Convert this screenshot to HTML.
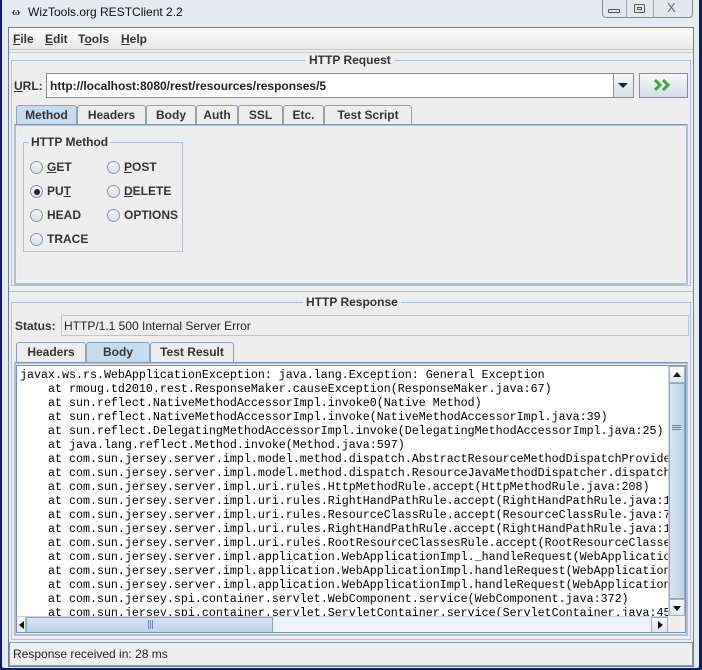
<!DOCTYPE html>
<html><head><meta charset="utf-8"><style>
*{box-sizing:border-box;margin:0;padding:0}
body{width:702px;height:670px;overflow:hidden;background:#0c1a78;font-family:"Liberation Sans",sans-serif;position:relative}
.a{position:absolute}
.frame{left:2px;top:0;width:697px;height:668px;background:#e6ebf3;border-radius:0 0 2px 2px}
.win{left:8px;top:27px;width:686px;height:640px;background:#eeeeee;border:1px solid #6f7f92}
.b{font-weight:bold;font-size:12px;color:#333}
.t{font-size:12px;color:#111}
.u{text-decoration:underline}
.tb{position:absolute;top:0;height:20px;border:1px solid #8ea1b8;border-bottom:none;background:#eeeeee;font-weight:bold;font-size:12px;color:#333;text-align:center;line-height:18px;border-radius:3px 3px 0 0}
.tb.sel{background:#c7dbef}
.rad{position:absolute;width:13px;height:13px;border-radius:50%;border:1px solid #8a96a4;background:linear-gradient(#f4f6f9,#d7dee8)}
.rl{position:absolute;font-weight:bold;font-size:12px;color:#333}
pre{font-family:"Liberation Mono",monospace;font-size:11.67px;line-height:14px;color:#000}
</style></head><body>
<div class="a frame"></div>
<div class="a" style="left:12px;top:6px;font-size:11px;font-weight:bold;color:#333;font-family:'Liberation Serif',serif">ω</div>
<div class="a" style="left:28px;top:5px;font-size:12px;color:#111">WizTools.org RESTClient 2.2</div>
<div class="a" style="left:602px;top:0;width:91px;height:18px;border:1px solid #7d8799;border-top:none;border-radius:0 0 4px 4px;background:#e3e8ef"></div>
<div class="a" style="left:626px;top:0;width:1px;height:18px;background:#9aa3b2"></div>
<div class="a" style="left:653px;top:0;width:1px;height:18px;background:#9aa3b2"></div>
<div class="a" style="left:608px;top:9px;width:12px;height:4px;border:1px solid #555;border-radius:1px"></div>
<div class="a" style="left:634px;top:4px;width:11px;height:9px;border:1px solid #555;border-radius:1px"></div>
<div class="a" style="left:637px;top:7px;width:5px;height:3px;border:1px solid #555"></div>
<div class="a" style="left:667px;top:0px;font-size:13px;color:#666">X</div>

<div class="a win"></div>
<div class="a" style="left:9px;top:28px;width:684px;height:22px;background:linear-gradient(#fbfbfb,#e9e9e9);border-bottom:1px solid #c9c9c9"></div>
<div class="a b" style="left:13px;top:32px"><span class="u">F</span>ile</div>
<div class="a b" style="left:45px;top:32px"><span class="u">E</span>dit</div>
<div class="a b" style="left:78px;top:32px">T<span class="u">o</span>ols</div>
<div class="a b" style="left:121px;top:32px"><span class="u">H</span>elp</div>
<div class="a" style="left:9px;top:52px;width:684px;height:1px;background:#ccc"></div>
<div class="a" style="left:11px;top:60px;width:680px;height:226px;border:1px solid #a9c1da"></div>
<div class="a b" style="left:306px;top:53px;background:#eee;padding:0 3px">HTTP Request</div>
<div class="a b" style="left:14px;top:79px"><span class="u">U</span>RL:</div>
<div class="a" style="left:46px;top:73px;width:588px;height:25px;border:1px solid #7d8ea2;background:#fff"></div>
<div class="a t" style="left:50px;top:79px;font-weight:bold;color:#222">http://localhost:8080/rest/resources/responses/5</div>
<div class="a" style="left:613px;top:74px;width:20px;height:23px;border-left:1px solid #7d8ea2;background:linear-gradient(#f5f7fa,#d6dee8)"></div>
<div class="a" style="left:618px;top:83px;width:0;height:0;border-left:5px solid transparent;border-right:5px solid transparent;border-top:5px solid #222"></div>
<div class="a" style="left:639px;top:73px;width:49px;height:25px;border:1px solid #7d8ea2;background:linear-gradient(#f8fafc,#d3dce8)"></div>
<svg class="a" style="left:654px;top:78px" width="18" height="14" viewBox="0 0 18 14"><path d="M1 2l5 5-5 5M9 2l5 5-5 5" fill="none" stroke="#3aa82a" stroke-width="3"/></svg>
<div style="position:absolute;left:16px;top:105px">
<div class="tb sel" style="left:0;width:61px">Method</div>
<div class="tb" style="left:61px;width:69px">Headers</div>
<div class="tb" style="left:130px;width:50px">Body</div>
<div class="tb" style="left:180px;width:42px">Auth</div>
<div class="tb" style="left:222px;width:45px">SSL</div>
<div class="tb" style="left:267px;width:41px">Etc.</div>
<div class="tb" style="left:308px;width:88px">Test Script</div>
</div>
<div class="a" style="left:14px;top:124px;width:674px;height:161px;border:2px solid #a9c1da;box-shadow:inset 0 0 0 1px #eef2f7"></div>
<div class="a" style="left:15px;top:124px;width:672px;height:1px;background:#7d96b4"></div>
<div class="a" style="left:23px;top:142px;width:160px;height:110px;border:1px solid #a9c1da"></div>
<div class="a b" style="left:29px;top:135px;background:#eee;padding:0 2px">HTTP Method</div>
<div class="rad" style="left:30px;top:161px"></div><div class="rl" style="left:47px;top:160px"><span class="u">G</span>ET</div>
<div class="rad" style="left:107px;top:161px"></div><div class="rl" style="left:124px;top:160px"><span class="u">P</span>OST</div>
<div class="rad" style="left:30px;top:185px"></div><div class="a" style="left:34px;top:189px;width:6px;height:6px;border-radius:50%;background:#222"></div><div class="rl" style="left:47px;top:184px">PU<span class="u">T</span></div>
<div class="rad" style="left:107px;top:185px"></div><div class="rl" style="left:124px;top:184px"><span class="u">D</span>ELETE</div>
<div class="rad" style="left:30px;top:209px"></div><div class="rl" style="left:47px;top:208px">HEAD</div>
<div class="rad" style="left:107px;top:209px"></div><div class="rl" style="left:124px;top:208px">OPTIONS</div>
<div class="rad" style="left:30px;top:233px"></div><div class="rl" style="left:47px;top:232px">TRACE</div>
<div class="a" style="left:9px;top:291px;width:684px;height:1px;background:#bbb"></div>
<div class="a" style="left:11px;top:302px;width:680px;height:338px;border:1px solid #a9c1da"></div>
<div class="a b" style="left:303px;top:295px;background:#eee;padding:0 3px">HTTP Response</div>
<div class="a b" style="left:15px;top:319px">Status:</div>
<div class="a" style="left:61px;top:315px;width:628px;height:21px;border:1px solid #b7c6d6"></div>
<div class="a t" style="left:64px;top:319px;color:#222">HTTP/1.1 500 Internal Server Error</div>
<div style="position:absolute;left:16px;top:342px">
<div class="tb" style="left:0;width:70px">Headers</div>
<div class="tb sel" style="left:70px;width:64px">Body</div>
<div class="tb" style="left:134px;width:84px">Test Result</div>
</div>
<div class="a" style="left:14px;top:362px;width:674px;height:274px;border:2px solid #a9c1da"></div>
<div class="a" style="left:15px;top:362px;width:672px;height:1px;background:#7d96b4"></div>
<div class="a" style="left:16px;top:365px;width:670px;height:268px;border:1px solid #7d8ea2;background:#fff;overflow:hidden">
<pre style="position:absolute;left:3px;top:2px">javax.ws.rs.WebApplicationException: java.lang.Exception: General Exception
    at rmoug.td2010.rest.ResponseMaker.causeException(ResponseMaker.java:67)
    at sun.reflect.NativeMethodAccessorImpl.invoke0(Native Method)
    at sun.reflect.NativeMethodAccessorImpl.invoke(NativeMethodAccessorImpl.java:39)
    at sun.reflect.DelegatingMethodAccessorImpl.invoke(DelegatingMethodAccessorImpl.java:25)
    at java.lang.reflect.Method.invoke(Method.java:597)
    at com.sun.jersey.server.impl.model.method.dispatch.AbstractResourceMethodDispatchProvider
    at com.sun.jersey.server.impl.model.method.dispatch.ResourceJavaMethodDispatcher.dispatch
    at com.sun.jersey.server.impl.uri.rules.HttpMethodRule.accept(HttpMethodRule.java:208)
    at com.sun.jersey.server.impl.uri.rules.RightHandPathRule.accept(RightHandPathRule.java:1
    at com.sun.jersey.server.impl.uri.rules.ResourceClassRule.accept(ResourceClassRule.java:7
    at com.sun.jersey.server.impl.uri.rules.RightHandPathRule.accept(RightHandPathRule.java:1
    at com.sun.jersey.server.impl.uri.rules.RootResourceClassesRule.accept(RootResourceClasse
    at com.sun.jersey.server.impl.application.WebApplicationImpl._handleRequest(WebApplicatio
    at com.sun.jersey.server.impl.application.WebApplicationImpl.handleRequest(WebApplication
    at com.sun.jersey.server.impl.application.WebApplicationImpl.handleRequest(WebApplication
    at com.sun.jersey.spi.container.servlet.WebComponent.service(WebComponent.java:372)
    at com.sun.jersey.spi.container.servlet.ServletContainer.service(ServletContainer.java:45</pre>
<div class="a" style="left:651px;top:0;width:17px;height:250px;background:#eef1f5;border-left:1px solid #c9d2dc"></div>
<div class="a" style="left:652px;top:0;width:16px;height:17px;background:linear-gradient(#fafbfc,#dfe5ec);border:1px solid #a4b1c0"></div>
<div class="a" style="left:656px;top:6px;border-left:4px solid transparent;border-right:4px solid transparent;border-bottom:5px solid #111"></div>
<div class="a" style="left:652px;top:17px;width:16px;height:216px;background:linear-gradient(90deg,#d6e4f3,#bcd1e8);border:1px solid #8ea6c2"></div>
<div class="a" style="left:655px;top:59px;width:9px;height:1px;background:#6a84a3;box-shadow:0 2px 0 #6a84a3,0 4px 0 #6a84a3"></div>
<div class="a" style="left:652px;top:233px;width:16px;height:17px;background:linear-gradient(#fafbfc,#dfe5ec);border:1px solid #a4b1c0"></div>
<div class="a" style="left:656px;top:240px;border-left:4px solid transparent;border-right:4px solid transparent;border-top:5px solid #111"></div>
<div class="a" style="left:0;top:250px;width:651px;height:17px;background:#eef1f5;border-top:1px solid #c9d2dc"></div>
<div class="a" style="left:0;top:251px;width:9px;height:16px;background:linear-gradient(#fafbfc,#dfe5ec);border-right:1px solid #a4b1c0"></div>
<div class="a" style="left:2px;top:255px;border-top:4px solid transparent;border-bottom:4px solid transparent;border-right:5px solid #111"></div>
<div class="a" style="left:9px;top:251px;width:247px;height:16px;background:linear-gradient(#d6e4f3,#bcd1e8);border:1px solid #8ea6c2"></div>
<div class="a" style="left:131px;top:254px;width:1px;height:9px;background:#6a84a3;box-shadow:2px 0 0 #6a84a3,4px 0 0 #6a84a3"></div>
<div class="a" style="left:634px;top:251px;width:17px;height:16px;background:linear-gradient(#fafbfc,#dfe5ec);border:1px solid #a4b1c0"></div>
<div class="a" style="left:641px;top:255px;border-top:4px solid transparent;border-bottom:4px solid transparent;border-left:5px solid #111"></div>
<div class="a" style="left:651px;top:250px;width:17px;height:17px;background:#eee"></div>
</div>
<div class="a" style="left:9px;top:642px;width:684px;height:24px;border:1px solid #8a98a8;background:#eee"></div>
<div class="a t" style="left:13px;top:647px;color:#222">Response received in: 28 ms</div>
</body></html>
